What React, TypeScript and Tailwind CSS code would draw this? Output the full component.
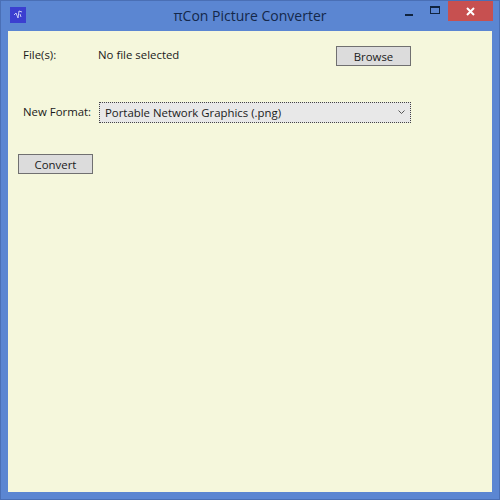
export default function App() {
  return (
    <div className="w-[500px] h-[500px] flex flex-col bg-[#5b86d2] border border-[#4a6fb5] font-['Open_Sans','Noto_Sans',sans-serif] text-[#1a1a1a] overflow-hidden">
      <div className="h-[30px] flex items-start shrink-0">
        <div className="flex-1 basis-0">
          <div className="w-[16px] h-[16px] ml-[9px] mt-[6px] bg-[#3b3fd0] flex items-center justify-center">
            <svg width="12" height="12" viewBox="0 0 12 12" fill="none" stroke="#c8ccf5" strokeWidth="1">
              <path d="M2 6 L4 4 L6 9 L7 2 L10 3 M8 5 L9 8" />
            </svg>
          </div>
        </div>
        <div className="text-center text-[14px] leading-[20px] mt-[5px] text-[#14284a]">πCon Picture Converter</div>
        <div className="flex-1 basis-0 flex items-start justify-end">
          <div className="w-[27px] h-[20px] flex items-center justify-center">
            <div className="w-[8px] h-[2px] mt-[7px] bg-[#10243f]"></div>
          </div>
          <div className="w-[26px] h-[20px] flex items-center justify-center">
            <div className="w-[10px] h-[8px] mb-[3px] border border-t-2 border-[#10243f]"></div>
          </div>
          <div className="w-[45px] h-[20px] bg-[#c75050] flex items-center justify-center">
            <svg width="9" height="9" viewBox="0 0 9 9" stroke="#ffffff" strokeWidth="2">
              <path d="M1 1 L8 8 M8 1 L1 8" />
            </svg>
          </div>
          <div className="w-[6px]"></div>
        </div>
      </div>
      <div className="flex-1 mx-[7px] mb-[7px] bg-[#f5f7dc] flex flex-col text-[11.4px]">
        <div className="flex items-center mt-[15px] h-[20px]">
          <span className="ml-[15px] w-[75px] pb-[3px]">File(s):</span>
          <span className="flex-1 pb-[3px]">No file selected</span>
          <button className="w-[75px] h-[20px] mr-[81px] bg-[#dcdcdc] border border-[#707070] pt-[2px] leading-none">Browse</button>
        </div>
        <div className="flex items-center mt-[36px] h-[21px]">
          <span className="ml-[15px] w-[76px] pb-[2px]">New Format:</span>
          <div className="w-[312px] h-[21px] bg-[#e8e8e8] border border-dotted border-[#444444] flex items-center justify-between pl-[5px] pr-[5px]">
            <span className="pt-[1px]">Portable Network Graphics (.png)</span>
            <svg width="7" height="5" viewBox="0 0 7 5" fill="none" stroke="#555555" strokeWidth="1">
              <path d="M0.5 0.5 L3.5 3.5 L6.5 0.5" />
            </svg>
          </div>
        </div>
        <button className="w-[75px] h-[20px] ml-[10px] mt-[31px] bg-[#dcdcdc] border border-[#707070] pt-[2px] leading-none">Convert</button>
      </div>
    </div>
  );
}
